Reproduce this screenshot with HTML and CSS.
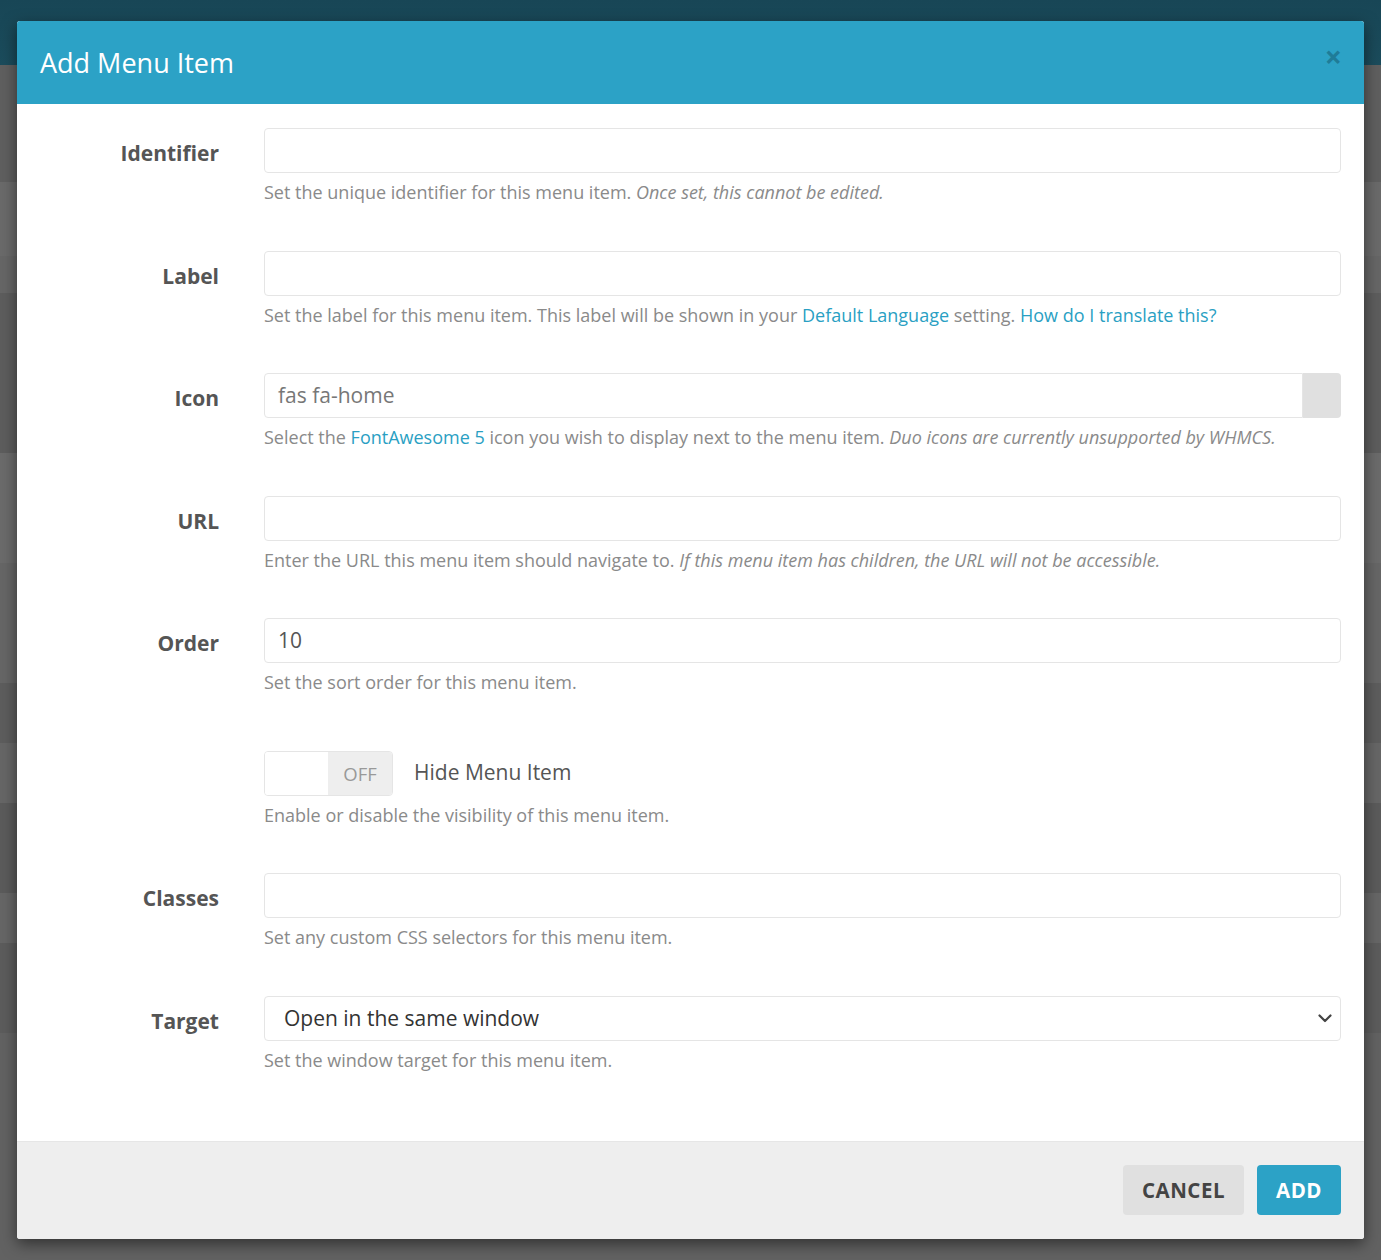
FILE: index.html
```html
<!DOCTYPE html>
<html>
<head>
<meta charset="utf-8">
<link rel="stylesheet" href="styles.css">
</head>
<body>
<div class="backdrop">
  <div class="bg-top"></div>
  <div class="bg-band b1"></div>
  <div class="bg-band b2"></div>
  <div class="bg-band b3"></div>
  <div class="bg-band b4"></div>
  <div class="bg-band b5"></div>
  <div class="bg-band b6"></div>
  <div class="bg-band b7"></div>
  <div class="bg-band b8"></div>
  <div class="bg-band b9"></div>
  <div class="bg-band b10"></div>
  <div class="bg-band b11"></div>
  <div class="bg-band b12"></div>
</div>

<div class="modal">
  <div class="modal-header">
    <h4 class="modal-title">Add Menu Item</h4>
    <span class="close">&times;</span>
  </div>
  <div class="modal-body">
    <div class="row">
      <label class="lbl">Identifier</label>
      <div class="field">
        <div class="input"></div>
        <p class="help">Set the unique identifier for this menu item. <em>Once set, this cannot be edited.</em></p>
      </div>
    </div>
    <div class="row">
      <label class="lbl">Label</label>
      <div class="field">
        <div class="input"></div>
        <p class="help">Set the label for this menu item. This label will be shown in your <a>Default Language</a> setting. <a>How do I translate this?</a></p>
      </div>
    </div>
    <div class="row">
      <label class="lbl">Icon</label>
      <div class="field">
        <div class="input-group">
          <div class="input placeholder">fas fa-home</div>
          <div class="addon"></div>
        </div>
        <p class="help">Select the <a>FontAwesome 5</a> icon you wish to display next to the menu item. <em>Duo icons are currently unsupported by WHMCS.</em></p>
      </div>
    </div>
    <div class="row">
      <label class="lbl">URL</label>
      <div class="field">
        <div class="input"></div>
        <p class="help">Enter the URL this menu item should navigate to. <em>If this menu item has children, the URL will not be accessible.</em></p>
      </div>
    </div>
    <div class="row">
      <label class="lbl">Order</label>
      <div class="field">
        <div class="input value">10</div>
        <p class="help">Set the sort order for this menu item.</p>
      </div>
    </div>
    <div class="row row-toggle">
      <span class="lbl"></span>
      <div class="field">
        <div class="toggle-line">
          <div class="toggle"><span class="knob"></span><span class="off">OFF</span></div>
          <span class="toggle-text">Hide Menu Item</span>
        </div>
        <p class="help">Enable or disable the visibility of this menu item.</p>
      </div>
    </div>
    <div class="row">
      <label class="lbl">Classes</label>
      <div class="field">
        <div class="input"></div>
        <p class="help">Set any custom CSS selectors for this menu item.</p>
      </div>
    </div>
    <div class="row">
      <label class="lbl">Target</label>
      <div class="field">
        <div class="input select"><span>Open in the same window</span>
          <svg class="chev" width="14" height="9" viewBox="0 0 14 9"><path d="M1.5 1.5 L7 7 L12.5 1.5" fill="none" stroke="#444" stroke-width="2.2" stroke-linecap="round" stroke-linejoin="round"/></svg>
        </div>
        <p class="help">Set the window target for this menu item.</p>
      </div>
    </div>
  </div>
  <div class="modal-footer">
    <button class="btn btn-cancel">CANCEL</button>
    <button class="btn btn-add">ADD</button>
  </div>
</div>
</body>
</html>
```

FILE: styles.css
```css
* { box-sizing: border-box; }
html, body { margin: 0; padding: 0; }
body {
  width: 1381px;
  height: 1260px;
  overflow: hidden;
  position: relative;
  font-family: "Open Sans", "Liberation Sans", sans-serif;
  background: #606060;
}
.backdrop { display: flex; flex-direction: column; height: 1260px; }
.bg-top { height: 65px; background: linear-gradient(#184656, #1b4c5c); flex: none; }
.bg-band { flex: none; background: #646464; }
.b1 { height: 117px; background: #5f5f5f; }
.b2 { height: 74px; background: #6a6a6a; }
.b3 { height: 37px; background: #666666; }
.b4 { height: 160px; background: #5d5d5d; }
.b5 { height: 110px; background: #6b6b6b; }
.b6 { height: 120px; background: #666666; }
.b7 { height: 60px; background: #5d5d5d; }
.b8 { height: 60px; background: #666666; }
.b9 { height: 90px; background: #5b5b5b; }
.b10 { height: 50px; background: #666666; }
.b11 { height: 90px; background: #5c5c5c; }
.b12 { height: 227px; background: #626262; }

.modal {
  position: absolute;
  left: 17px;
  top: 21px;
  width: 1347px;
  background: #fff;
  border-radius: 3px;
  overflow: hidden;
  box-shadow: 0 5px 15px rgba(0,0,0,0.5);
}
.modal-header {
  height: 83px;
  background: #2ca2c6;
  display: flex;
  align-items: center;
  justify-content: space-between;
  padding: 0 22px 0 23px;
}
.modal-title {
  margin: 0;
  color: #fff;
  font-weight: 400;
  font-size: 27px;
  line-height: 1;
  padding-bottom: 1px;
}
.close {
  color: #1f7c98;
  font-size: 30px;
  font-weight: 700;
  line-height: 1;
  margin-top: -12px;
}
.modal-body {
  padding: 24px 23px 68px 0;
}
.row {
  display: grid;
  grid-template-columns: 202px 1077px;
  column-gap: 45px;
  margin-bottom: 45.5px;
}
.row:last-child { margin-bottom: 0; }
.row-toggle { padding-top: 10px; }
.lbl {
  text-align: right;
  font-weight: 700;
  font-size: 21px;
  color: #555;
  line-height: 45px;
  padding-top: 3px;
}
.field { min-width: 0; }
.input {
  height: 45px;
  border: 1px solid #e5e5e5;
  border-radius: 4px;
  background: #fff;
  font-size: 21px;
  line-height: 43px;
  padding: 0 13px;
  color: #555;
}
.placeholder { color: #777; }
.input-group { display: flex; }
.input-group .input { flex: 1; border-radius: 4px 0 0 4px; }
.addon {
  width: 38px;
  height: 45px;
  background: #e0e0e0;
  border-radius: 0 4px 4px 0;
  flex: none;
}
.select {
  display: flex;
  align-items: center;
  justify-content: space-between;
  padding: 0 8px 0 19px;
  color: #333;
}
.chev { display: block; }
.help {
  margin: 7px 0 0;
  font-size: 18px;
  line-height: 25px;
  color: #8a8a8a;
  white-space: nowrap;
}
.help em { font-style: italic; }
.help a { color: #2a9fc3; }
.toggle-line { display: flex; align-items: center; height: 45px; }
.toggle {
  width: 129px;
  height: 45px;
  border: 1px solid #e5e5e5;
  border-radius: 4px;
  display: flex;
  overflow: hidden;
}
.knob { width: 63px; background: #fff; }
.off {
  flex: 1;
  background: #eeeeee;
  color: #999;
  font-size: 18.5px;
  display: flex;
  align-items: center;
  justify-content: center;
}
.toggle-text {
  margin-left: 21px;
  margin-top: -3px;
  font-size: 21px;
  color: #555;
}
.modal-footer {
  height: 98px;
  background: #eeeeee;
  border-top: 1px solid #e6e6e6;
  display: flex;
  justify-content: flex-end;
  align-items: center;
  gap: 13px;
  padding: 0 23px 0 0;
}
.btn {
  height: 50px;
  border: 0;
  border-radius: 4px;
  font-family: "Open Sans", "Liberation Sans", sans-serif;
  font-weight: 700;
  font-size: 20.5px;
  letter-spacing: 0.5px;
  padding: 0;
}
.btn-cancel { background: #e0e0e0; color: #444; width: 121px; }
.btn-add { background: #2ca2c6; color: #fff; width: 84px; }
```
